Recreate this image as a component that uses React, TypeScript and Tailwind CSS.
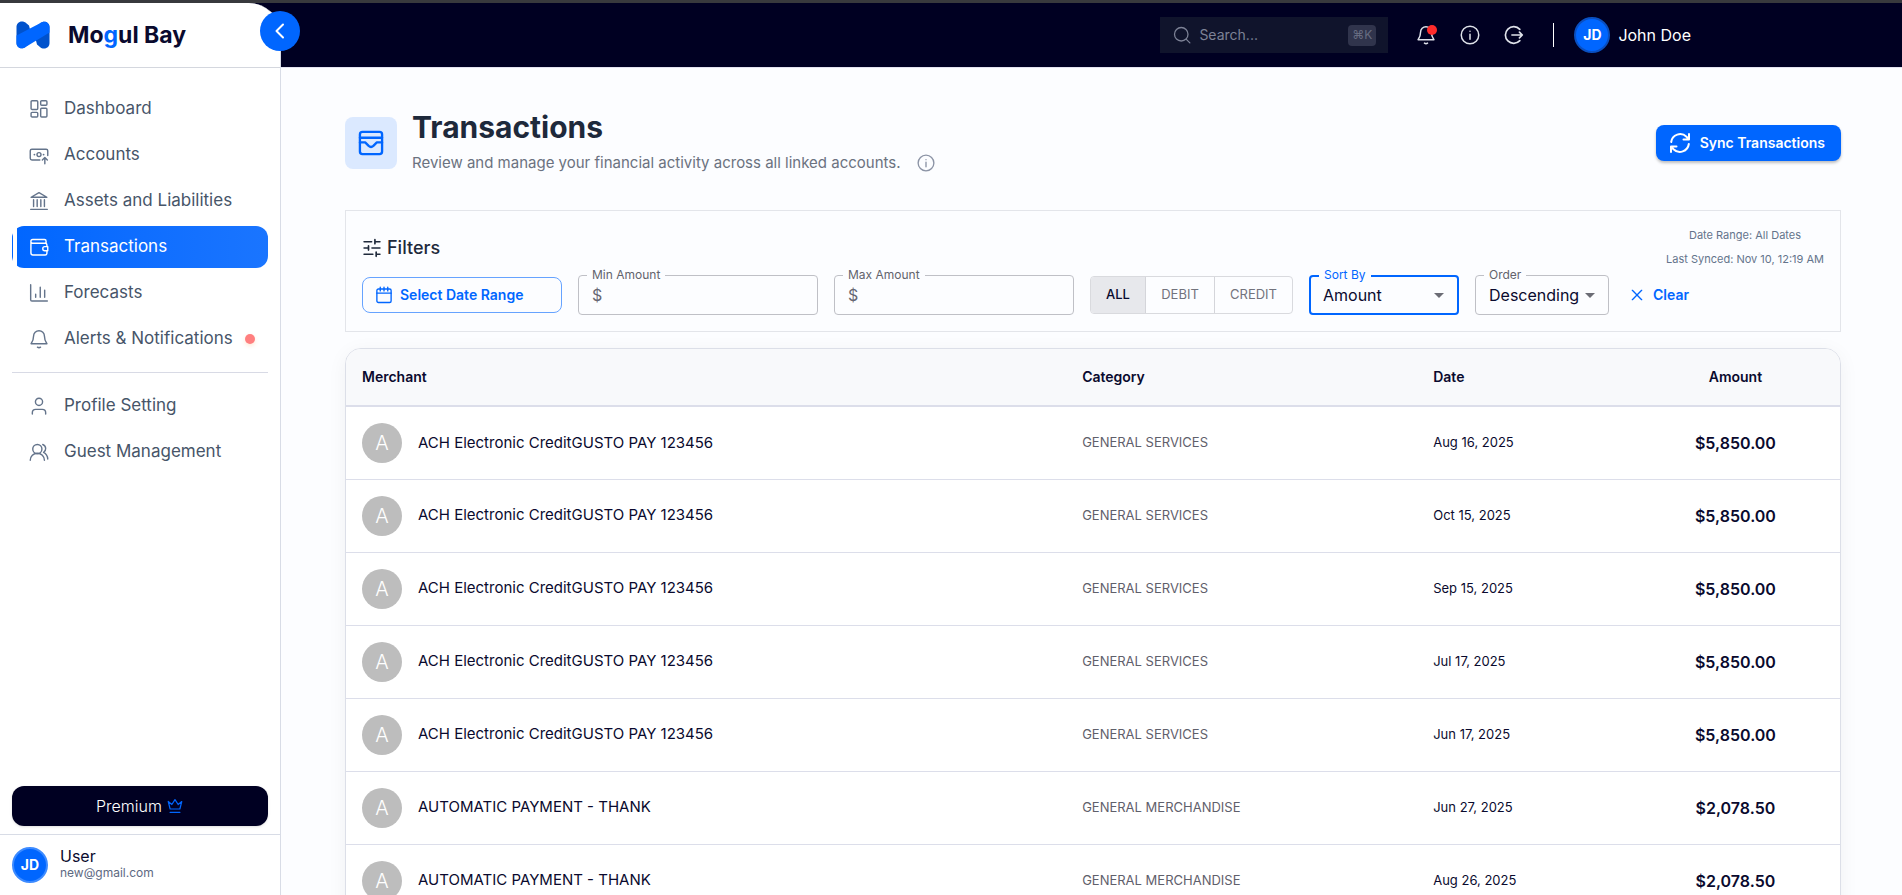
import { useState } from "react";
import type { ReactNode } from "react";

type IconProps = { className?: string; children: ReactNode; width?: number };

function Glyph({ className = "size-5", children, width = 1.5 }: IconProps) {
  return (
    <svg
      viewBox="0 0 24 24"
      fill="none"
      stroke="currentColor"
      strokeWidth={width}
      strokeLinecap="round"
      strokeLinejoin="round"
      className={"shrink-0 " + className}
      aria-hidden="true"
    >
      {children}
    </svg>
  );
}

const navIcons: Record<string, ReactNode> = {
  dashboard: (
    <>
      <rect x="2.5" y="2" width="8" height="10.5" rx="1.2" />
      <rect x="14" y="2" width="7.5" height="5.5" rx="1.2" />
      <rect x="2.5" y="16" width="8" height="5.500" rx="1.2" />
      <rect x="14" y="11" width="7.5" height="10.500" rx="1.2" />
    </>
  ),
  accounts: (
    <>
      <path d="M13 18H3.500a2 2 0 0 1-2-2V7a2 2 0 0 1 2-2h17a2 2 0 0 1 2 2v5.500" />
      <circle cx="12" cy="11.500" r="2.400" />
      <path d="M6.500 11.500h.01M17.500 11.500h.01" strokeWidth="2.200" />
      <path d="M19 22.500v-7M16 18l3-3 3 3" />
    </>
  ),
  bank: (
    <>
      <path d="M2.500 7.500 12 2l9.500 5.500z" />
      <path d="M5.500 10.500v8M9.800 10.500v8M14.200 10.500v8M18.500 10.500v8M2 22h20" />
    </>
  ),
  wallet: (
    <>
      <path d="M20.500 7.500V5a2 2 0 0 0-2-2H4.500a2.200 2.200 0 0 0 0 4.500h15a2 2 0 0 1 2 2V11M21.500 17v2.500a2 2 0 0 1-2 2h-15a2.200 2.200 0 0 1-2.200-2.200V5" />
      <path d="M22.500 11.500v5H19a2.500 2.500 0 0 1 0-5z" />
    </>
  ),
  chart: <path d="M2 2v18a1.500 1.500 0 0 0 1.500 1.500H22M8 17v-3.500M13.500 17V5M18.800 17V8.500" />,
  bell: (
    <>
      <path d="M12 2a6.500 6.500 0 0 0-6.500 6.500c0 4.500-1 6.500-3 9.200h19c-2-2.700-3-4.700-3-9.200A6.500 6.500 0 0 0 12 2Z" />
      <path d="M10.200 21.800c1 .8 2.600.8 3.600 0" />
    </>
  ),
  user: (
    <>
      <circle cx="12" cy="7" r="4.300" />
      <path d="M4 21.500v-1.500a4 4 0 0 1 4-4h8a4 4 0 0 1 4 4v1.500" />
    </>
  ),
  users: (
    <>
      <circle cx="10" cy="8.500" r="5.500" />
      <path d="M1.500 22a8.500 8.500 0 0 1 17 0M16.500 3c4.500 1.500 4.500 7.500 1 9.500 3 1.500 4.800 4.500 5 8" />
    </>
  ),
};

type NavItem = { label: string; icon: string; active?: boolean; dot?: boolean };

const primaryNav: NavItem[] = [
  { label: "Dashboard", icon: "dashboard" },
  { label: "Accounts", icon: "accounts" },
  { label: "Assets and Liabilities", icon: "bank" },
  { label: "Transactions", icon: "wallet", active: true },
  { label: "Forecasts", icon: "chart" },
  { label: "Alerts & Notifications", icon: "bell", dot: true },
];

const secondaryNav: NavItem[] = [
  { label: "Profile Setting", icon: "user" },
  { label: "Guest Management", icon: "users" },
];

function NavLink({ item }: { item: NavItem }) {
  return (
    <a
      href="#"
      aria-current={item.active ? "page" : undefined}
      className={
        "relative flex h-[42px] items-center rounded-xl pl-[17px] " +
        (item.active ? "bg-linear-to-r from-[#0066ff] to-[#1a75ff] text-white" : "text-[#475569]")
      }
    >
      {item.active && <span className="absolute inset-y-0 left-px w-1 bg-white" />}
      <Glyph width={1.700} className={item.active ? "size-5 text-white" : "size-5 text-[#64748b]"}>
        {navIcons[item.icon]}
      </Glyph>
      <span className="ml-[15px] whitespace-nowrap text-[17px]">{item.label}</span>
      {item.dot && <span className="ml-3 size-[10px] rounded-full bg-[#ff7f7f] shadow-[0_2px_4px_rgba(255,180,120,0.3)]" />}
    </a>
  );
}

function Logo() {
  return (
    <svg viewBox="0 0 34 28" className="h-7 w-[34px] shrink-0" aria-hidden="true">
      <path d="M6 .5C2.500.5.500 3 .500 6v16c0 5 6 7 9.500 3.500l7-5.500L13 4.500 10 2C9 1 7.500.500 6 .500Z" fill="#0052cc" />
      <path d="M28 27.500c3.500 0 5.500-2.500 5.500-5.500V6c0-5-6-7-9.500-3.500L17 8l4 15.500 3 2.500c1 1 2.500 1.500 4 1.500Z" fill="#0052cc" />
      <path d="M.500 14.500 24 2.200C28-1 33.500 1 33.500 6v5.500L10 25.800C6 29 .500 27 .500 22Z" fill="#0066ff" />
    </svg>
  );
}

function Sidebar() {
  return (
    <aside className="relative z-10 flex w-[281px] shrink-0 flex-col rounded-tr-[32px] border-r border-[#d8dce6] bg-white">
      <div className="flex h-16 shrink-0 items-center gap-[18px] pl-4">
        <Logo />
        <span className="text-[23px] font-bold text-[#0a0a2e]">
          Mo<span className="text-[#0066ff]">g</span>ul Bay
        </span>
      </div>
      <button
        type="button"
        aria-label="Collapse sidebar"
        className="absolute top-2 -right-5 flex size-10 items-center justify-center rounded-full bg-[#0066ff] text-white"
      >
        <Glyph className="size-6" width={2}>
          <path d="m15 5.500-6.500 6.500 6.500 6.500" />
        </Glyph>
      </button>
      <nav className="flex flex-1 flex-col gap-1 border-t border-[#d4d7de] px-3 pt-5">
        {primaryNav.map((item) => (
          <NavLink key={item.label} item={item} />
        ))}
        <hr className="my-2 border-[#d8dae5]" />
        {secondaryNav.map((item) => (
          <NavLink key={item.label} item={item} />
        ))}
      </nav>
      <div className="px-3 pb-2">
        <button
          type="button"
          className="flex h-10 w-full items-center justify-center gap-1 rounded-xl bg-[#000022] text-base font-light text-white shadow-sm"
        >
          Premium
          <Glyph className="size-[18px] text-[#0066ff]" width={1.6}>
            <path d="m3 6 2.500 10h13L21 6l-4.800 4L12 3.500 7.800 10zM5.500 20.500h13" />
          </Glyph>
        </button>
      </div>
      <div className="flex h-[61px] shrink-0 items-start gap-3 border-t border-[#d8dce6] px-3 pt-3">
        <span className="flex size-9 items-center justify-center rounded-full border-2 border-[#3d8bff] bg-[#0066ff] text-sm font-bold text-white">
          JD
        </span>
        <span className="flex flex-col">
          <span className="text-base leading-[18px] text-[#0a0a2e]">User</span>
          <span className="text-xs leading-4 text-[#5d6982]">new@gmail.com</span>
        </span>
      </div>
    </aside>
  );
}

function InfoIcon({ className, width }: { className: string; width?: number }) {
  return (
    <Glyph className={className} width={width}>
      <circle cx="12" cy="12" r="10.500" />
      <path d="M12 11v6M12 7.500v.01" />
    </Glyph>
  );
}

function TopBar() {
  return (
    <header className="flex h-16 shrink-0 items-center justify-end bg-[#000022] pr-[211px] text-white">
      <label className="flex h-9 w-[228px] items-center bg-[#10142c] pr-3 pl-[13px]">
        <Glyph className="size-[18px] text-[#7d8296]" width={1.7}>
          <circle cx="11" cy="11" r="9" />
          <path d="m17.800 17.800 4.700 4.700" />
        </Glyph>
        <input
          type="search"
          aria-label="Search"
          placeholder="Search..."
          className="ml-2 w-full min-w-0 bg-transparent text-sm outline-none placeholder:text-[#7d8296]"
        />
        <kbd className="flex h-[21px] w-7 shrink-0 items-center justify-center rounded bg-[#30344c] font-[inherit] text-xs text-[#686d82]">
          ⌘K
        </kbd>
      </label>
      <button type="button" aria-label="Notifications" className="relative ml-7 text-[#dfe2ea]">
        <Glyph width={1.800}>{navIcons.bell}</Glyph>
        <span className="absolute top-0 -right-px size-[10px] rounded-full bg-[#ff2b2b]" />
      </button>
      <button type="button" aria-label="Information" className="ml-6 text-[#dfe2ea]">
        <InfoIcon className="size-5" width={1.800} />
      </button>
      <button type="button" aria-label="Log out" className="ml-6 text-[#dfe2ea]">
        <Glyph width={2}>
          <path d="M19 5.200A10 10 0 1 0 19 18.800" />
          <path d="M9.500 12H22M18.500 8.500 22 12l-3.500 3.500" />
        </Glyph>
      </button>
      <span className="ml-[29px] h-6 w-px bg-white" />
      <span className="ml-5 flex size-9 items-center justify-center rounded-full border-2 border-[#0a4fc0] bg-[#0066ff] text-sm font-bold">
        JD
      </span>
      <span className="ml-2 text-base">John Doe</span>
    </header>
  );
}

function PageHeading() {
  return (
    <div className="flex items-center">
      <span className="flex size-[52px] items-center justify-center rounded-lg bg-[#dbe9ff] text-[#0066ff]">
        <Glyph className="size-7" width={2}>
          <rect x="2.500" y="2.500" width="19" height="19" rx="2.200" />
          <path d="M2.500 7.500h19M2.500 11.500h4.500l3 3a3 3 0 0 0 4 0l3-3h4.500" />
        </Glyph>
      </span>
      <div className="ml-[15px] flex-1">
        <h1 className="text-3xl leading-8 font-bold text-[#1e293b]">Transactions</h1>
        <p className="mt-2 flex items-center gap-4 text-[15px] leading-6 text-[#6b7280]">
          Review and manage your financial activity across all linked accounts.
          <InfoIcon className="size-[18px] text-[#8b93a5]" width={1.800} />
        </p>
      </div>
      <button
        type="button"
        className="flex h-9 items-center gap-2 rounded-lg bg-[#0066ff] pr-4 pl-3 text-sm font-semibold text-white shadow-[0_2px_3px_rgba(0,0,0,0.25)]"
      >
        <Glyph className="size-6" width={2}>
          <path d="M21 3v5.500h-5.500M3 21v-5.500h5.500M3.200 11A9 9 0 0 1 18.500 5.800L21 8.500M20.800 13A9 9 0 0 1 5.500 18.200L3 15.500" />
        </Glyph>
        Sync Transactions
      </button>
    </div>
  );
}

type OutlinedProps = { id: string; label: string; focused?: boolean; className: string; children: ReactNode };

function Outlined({ id, label, focused, className, children }: OutlinedProps) {
  return (
    <div
      className={
        "relative flex h-10 items-center rounded " +
        (focused ? "border-2 border-[#0066ff] " : "border border-[#bfc0c6] ") +
        className
      }
    >
      <label
        htmlFor={id}
        className={
          "absolute left-2 bg-[#fcfdff] px-[5px] text-xs leading-4 " +
          (focused ? "-top-[10px] text-[#0066ff]" : "-top-[9px] text-[#62636c]")
        }
      >
        {label}
      </label>
      {children}
    </div>
  );
}

function AmountField({ id, label }: { id: string; label: string }) {
  return (
    <Outlined id={id} label={label} className="w-60 gap-2 px-[13px]">
      <span className="text-base text-[#666773]">$</span>
      <input id={id} type="text" inputMode="decimal" className="w-full min-w-0 bg-transparent text-base outline-none" />
    </Outlined>
  );
}

type SelectProps = { id: string; label: string; options: string[]; focused?: boolean; className: string };

function SelectField({ id, label, options, focused, className }: SelectProps) {
  return (
    <Outlined id={id} label={label} focused={focused} className={className}>
      <select
        id={id}
        className={"h-full w-full appearance-none bg-transparent text-base text-[#0a0a2e] outline-none " + (focused ? "pl-3" : "pl-[13px]")}
      >
        {options.map((option) => (
          <option key={option}>{option}</option>
        ))}
      </select>
      <svg viewBox="0 0 10 5" className="pointer-events-none absolute right-[13px] h-[5px] w-[10px]" aria-hidden="true">
        <path d="M0 0h10L5 5z" fill="#6b6c75" />
      </svg>
    </Outlined>
  );
}

function Filters() {
  const [kind, setKind] = useState("ALL");
  const kinds = [
    { name: "ALL", width: "w-[55px]" },
    { name: "DEBIT", width: "w-[69px]" },
    { name: "CREDIT", width: "w-[77px]" },
  ];
  return (
    <section aria-label="Filters" className="mt-[35px] border border-[#e3e5ea] px-4 pb-4">
      <div className="flex h-16 justify-between">
        <h2 className="flex items-end gap-[5px] pb-[15px] text-lg leading-6 font-medium text-[#1e293b]">
          <Glyph className="mb-[2px] size-5" width={2}>
            <path d="M2.500 4.500h9M15.500 4.500h6M2.500 12h5M12 12h9.500M2.500 19.500h10.500M17 19.500h4.500M15.500 2v5M7.800 9.500v5M17 17v5" />
          </Glyph>
          Filters
        </h2>
        <div className="flex flex-col items-center gap-2 pt-4 text-[11px] leading-4 text-[#64748b]">
          <span>Date Range: All Dates</span>
          <span>Last Synced: Nov 10, 12:19 AM</span>
        </div>
      </div>
      <div className="flex flex-wrap items-center gap-4">
        <button
          type="button"
          className="flex h-9 w-[200px] items-center gap-[7px] rounded-lg border border-[#66a3ff] px-3 text-sm font-semibold text-[#0066ff]"
        >
          <Glyph className="size-[18px]" width={1.800}>
            <rect x="2.500" y="4" width="19" height="18" rx="2" />
            <path d="M2.500 9.500h19M7 1.500v5M12 1.500v5M17 1.500v5" />
          </Glyph>
          Select Date Range
        </button>
        <AmountField id="min-amount" label="Min Amount" />
        <AmountField id="max-amount" label="Max Amount" />
        <div role="group" aria-label="Transaction type" className="flex h-[38px] divide-x divide-[#d4d5da] overflow-hidden rounded border border-[#d9dade]">
          {kinds.map(({ name, width }) => (
            <button
              key={name}
              type="button"
              aria-pressed={kind === name}
              onClick={() => setKind(name)}
              className={width + " text-[13px] " + (kind === name ? "bg-[#e7e8ec] text-[#0a0a2e] font-medium" : "text-[#72737d]")}
            >
              {name}
            </button>
          ))}
        </div>
        <SelectField id="sort-by" label="Sort By" options={["Amount", "Date", "Merchant"]} focused className="w-[150px]" />
        <SelectField id="order" label="Order" options={["Descending", "Ascending"]} className="w-[134px]" />
        <button type="button" className="flex items-center gap-2 pl-1 text-sm font-semibold text-[#0066ff]">
          <Glyph className="size-4" width={2}>
            <path d="m5 5 14 14M19 5 5 19" />
          </Glyph>
          Clear
        </button>
      </div>
    </section>
  );
}

const ach = "ACH Electronic CreditGUSTO PAY 123456";
const auto = "AUTOMATIC PAYMENT - THANK";
const rows = [
  { merchant: ach, category: "GENERAL SERVICES", date: "Aug 16, 2025", amount: "$5,850.00" },
  { merchant: ach, category: "GENERAL SERVICES", date: "Oct 15, 2025", amount: "$5,850.00" },
  { merchant: ach, category: "GENERAL SERVICES", date: "Sep 15, 2025", amount: "$5,850.00" },
  { merchant: ach, category: "GENERAL SERVICES", date: "Jul 17, 2025", amount: "$5,850.00" },
  { merchant: ach, category: "GENERAL SERVICES", date: "Jun 17, 2025", amount: "$5,850.00" },
  { merchant: auto, category: "GENERAL MERCHANDISE", date: "Jun 27, 2025", amount: "$2,078.50" },
  { merchant: auto, category: "GENERAL MERCHANDISE", date: "Aug 26, 2025", amount: "$2,078.50" },
];

function TransactionsTable() {
  return (
    <div className="mt-4 overflow-hidden rounded-2xl border border-[#dcdfe8] bg-white shadow-[0_4px_20px_rgba(0,0,40,0.05)]">
      <table className="w-full table-fixed border-collapse text-left text-[#0a0a2e]">
        <colgroup>
          <col />
          <col className="w-[23.5%]" />
          <col className="w-[14.3%]" />
          <col className="w-[14%]" />
        </colgroup>
        <thead>
          <tr className="h-[57px] border-b-2 border-[#dcdeea] bg-[#f8f9fb] text-sm">
            <th className="px-4 font-semibold">Merchant</th>
            <th className="px-4 font-semibold">Category</th>
            <th className="px-4 font-semibold">Date</th>
            <th className="px-4 text-center font-semibold">Amount</th>
          </tr>
        </thead>
        <tbody>
          {rows.map((row) => (
            <tr key={row.date} className="h-[73px] border-b border-[#dcdeea]">
              <td className="px-4">
                <div className="flex items-center gap-4">
                  <span className="flex size-10 items-center justify-center rounded-full bg-[#bdbdbd] text-xl font-light text-white">A</span>
                  <span className="text-[15px]">{row.merchant}</span>
                </div>
              </td>
              <td className="px-4 text-[13px] text-[#5f606b]">{row.category}</td>
              <td className="px-4 text-[13px]">{row.date}</td>
              <td className="px-4 text-center text-base font-semibold">{row.amount}</td>
            </tr>
          ))}
        </tbody>
      </table>
    </div>
  );
}

export default function App() {
  return (
    <div className="flex h-screen flex-col overflow-hidden border-t-[3px] border-[#38393d] bg-[#000022] font-['Inter',sans-serif]">
      <div className="flex min-h-0 flex-1">
        <Sidebar />
        <div className="flex min-w-0 flex-1 flex-col">
          <TopBar />
          <main className="min-h-0 flex-1 overflow-hidden border-t border-[#e3e3f0] bg-[#fcfdff] pt-[43px] pr-[61px] pl-16">
            <PageHeading />
            <Filters />
            <TransactionsTable />
          </main>
        </div>
      </div>
    </div>
  );
}
